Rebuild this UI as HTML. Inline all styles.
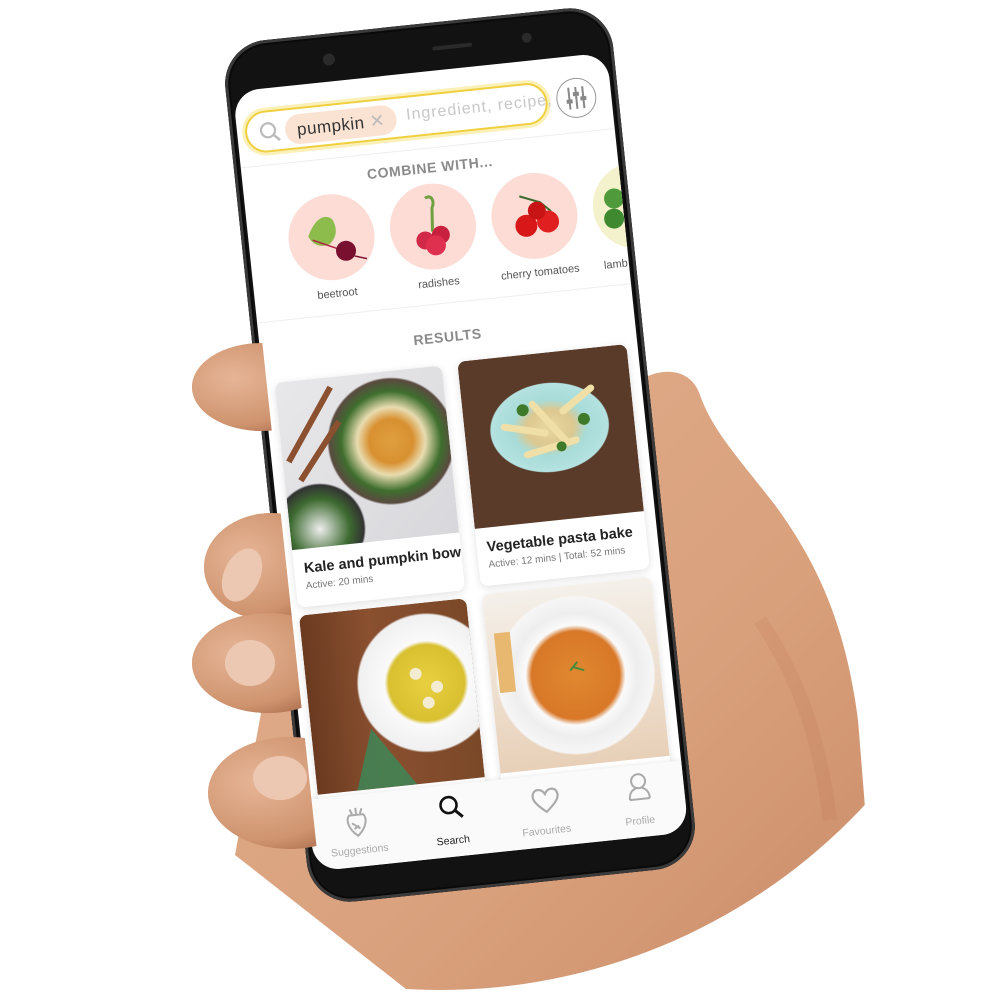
<!DOCTYPE html>
<html><head><meta charset="utf-8"><style>
*{margin:0;padding:0;box-sizing:border-box}
body{width:1000px;height:1000px;background:#fff;overflow:hidden;position:relative;font-family:"Liberation Sans",sans-serif}
#back,#front{position:absolute;left:0;top:0}
#phone{position:absolute;left:265px;top:22px;width:390px;height:866px;background:#121212;border-radius:44px;transform:rotate(-6deg);box-shadow:inset 0 0 0 3px #3a3a3a,inset 0 0 0 5px #0a0a0a}
.cam{position:absolute;border-radius:50%;background:#2a2a2a}
#screen{position:absolute;left:7px;top:48px;width:376px;height:784px;background:#fff;border-radius:26px;overflow:hidden}
.abs{position:absolute}
.search{left:8px;top:22px;width:304px;height:42px;border:2px solid #efcf3e;border-radius:22px;box-shadow:0 0 0 3px #fbf0b8}
.chip{left:38px;top:5px;width:112px;height:30px;background:#fbe3d4;border-radius:15px;font-size:17px;color:#333;padding:5px 0 0 12px;letter-spacing:.5px}
.ph{left:160px;top:9px;font-size:16px;color:#c8c8c8;letter-spacing:1px;white-space:nowrap}
.circ{width:86px;height:86px;border-radius:50%;background:#fcdcd5;top:112px}
.lab{top:206px;font-size:11px;color:#555;width:120px;text-align:center}
.h{width:376px;text-align:center;font-size:14px;font-weight:bold;color:#8a8a8a;letter-spacing:.6px}
.card{background:#fff;border-radius:8px;box-shadow:0 2px 8px rgba(0,0,0,.12);overflow:hidden}
.img{position:absolute;left:0;top:0;width:100%}
.t{position:absolute;left:10px;font-size:14.5px;font-weight:bold;color:#222;white-space:nowrap}
.s{position:absolute;left:10px;font-size:10px;color:#777;white-space:nowrap}
.nav{left:0;top:712px;width:376px;height:72px;background:#fafafa;box-shadow:0 -1px 4px rgba(0,0,0,.08)}
.nl{position:absolute;top:50px;font-size:10.5px;color:#aaa;width:94px;text-align:center}
</style></head><body>
<svg id="back" width="1000" height="1000">
<defs><clipPath id="c"><circle cx="440" cy="410" r="580"/></clipPath>
<linearGradient id="sk" x1="0" y1="0" x2="1" y2="1"><stop offset="0" stop-color="#e2b08f"/><stop offset=".6" stop-color="#d9a07c"/><stop offset="1" stop-color="#c98a66"/></linearGradient>
<radialGradient id="f" cx=".3" cy=".4" r=".75"><stop offset="0" stop-color="#e6b597"/><stop offset=".7" stop-color="#cf946f"/><stop offset="1" stop-color="#a86a4c"/></radialGradient></defs>
<g clip-path="url(#c)">
<path d="M640,380 C660,368 690,366 700,395 C712,430 740,460 775,505 C815,560 845,620 858,720 L866,820 L880,1010 L420,1000 L235,855 L300,500 Z" fill="url(#sk)"/>
<path d="M760,620 C800,680 820,740 830,820" stroke="#c27e5c" stroke-width="14" fill="none" opacity=".25"/>
</g>
<g id="fingers">
<ellipse cx="262" cy="387" rx="70" ry="44" fill="url(#f)"/>
<ellipse cx="272" cy="567" rx="68" ry="54" fill="url(#f)"/>
<ellipse cx="268" cy="663" rx="76" ry="50" fill="url(#f)"/>
<ellipse cx="290" cy="793" rx="82" ry="56" fill="url(#f)"/>
</g>
</svg>
<div id="phone">
<div class="cam" style="left:100px;top:20px;width:12px;height:12px"></div>
<div class="cam" style="left:210px;top:24px;width:40px;height:4px;border-radius:2px"></div>
<div class="cam" style="left:300px;top:20px;width:10px;height:10px"></div>
<div id="screen">
 <div class="abs search">
  <svg class="abs" style="left:12px;top:9px" width="22" height="22"><circle cx="9" cy="9" r="7" stroke="#bbb" stroke-width="2.2" fill="none"/><path d="M14 14l6 6" stroke="#bbb" stroke-width="2.5"/></svg>
  <div class="abs chip">pumpkin <span style="color:#bbb;font-size:18px">&#x2715;</span></div>
  <div class="abs ph">Ingredient, recipe,</div>
 </div>
 <div class="abs" style="left:321px;top:22px;width:40px;height:40px;border:1.5px solid #999;border-radius:50%">
  <svg width="38" height="38"><g stroke="#888" stroke-width="2"><path d="M12 8v22M19 8v22M26 8v22"/></g><g fill="#888"><rect x="9" y="20" width="6" height="4"/><rect x="16" y="13" width="6" height="4"/><rect x="23" y="18" width="6" height="4"/></g></svg>
 </div>
 <div class="abs" style="left:0;top:76px;width:376px;height:1px;background:#eee"></div>
 <div class="abs h" style="top:88px">COMBINE WITH...</div>
 <div class="abs circ" style="left:40px">
  <svg width="86" height="86"><path d="M20 40 C28 22 40 18 46 26 C50 36 48 44 40 50 C32 52 24 50 20 40Z" fill="#8dbb4c"/><path d="M24 44 L50 56" stroke="#b02040" stroke-width="1.5"/><circle cx="56" cy="58" r="10" fill="#7a1030"/><path d="M64 64l12 4" stroke="#7a1030" stroke-width="1.5"/></svg></div>
 <div class="abs circ" style="left:142px">
  <svg width="86" height="86"><path d="M38 14 C44 10 48 18 44 24 L42 48" stroke="#6fa040" stroke-width="3" fill="none"/><circle cx="34" cy="56" r="9" fill="#d02a48"/><circle cx="50" cy="52" r="9" fill="#c8203f"/><circle cx="44" cy="62" r="10" fill="#e03050"/></svg></div>
 <div class="abs circ" style="left:244px">
  <svg width="86" height="86"><path d="M30 22 L50 30 L60 40" stroke="#3d6a2a" stroke-width="2" fill="none"/><circle cx="34" cy="52" r="11" fill="#d81818"/><circle cx="56" cy="50" r="11" fill="#e02020"/><circle cx="46" cy="38" r="9" fill="#c81414"/></svg></div>
 <div class="abs circ" style="left:346px;background:#f4f2cc">
  <svg width="86" height="86"><circle cx="22" cy="34" r="10" fill="#4f9a3a"/><circle cx="20" cy="54" r="10" fill="#3f8a30"/></svg></div>
 <div class="abs lab" style="left:23px">beetroot</div>
 <div class="abs lab" style="left:125px">radishes</div>
 <div class="abs lab" style="left:227px">cherry tomatoes</div>
 <div class="abs lab" style="left:329px;text-align:left;padding-left:22px">lamb</div>
 <div class="abs" style="left:0;top:232px;width:376px;height:1px;background:#eee"></div>
 <div class="abs h" style="top:258px">RESULTS</div>

 <div class="abs card" style="left:11px;top:294px;width:168px;height:226px">
  <div class="img" style="height:168px;background:radial-gradient(circle at 110px 70px,#e0a040 0,#d89030 22px,#e8dcb0 34px,#3e6e2e 50px,#5a4a40 62px,transparent 64px),radial-gradient(circle at 30px 150px,#eee 0,#3d6a30 30px,#333 44px,transparent 46px),linear-gradient(135deg,#e8e8ea,#d8d8dc)"></div>
  <svg class="img" width="168" height="168"><path d="M6 80 L55 10" stroke="#8a5030" stroke-width="6"/><path d="M16 100 L60 45" stroke="#8a5030" stroke-width="6"/></svg>
  <div class="t" style="top:180px">Kale and pumpkin bowl</div>
  <div class="s" style="top:200px">Active: 20 mins</div>
 </div>
 <div class="abs card" style="left:195px;top:292px;width:170px;height:226px">
  <div class="img" style="height:168px;background:radial-gradient(ellipse 60px 45px at 85px 75px,#e8d8a0 0,#dcc890 40%,#a8dcd8 62%,#b4e2e0 98%,#5a3a28 100%)"></div>
  <svg class="img" width="170" height="168"><g stroke="#f0e0a8" stroke-width="7" stroke-linecap="round"><path d="M40 70l40 10M70 50l30 40M100 60l30-20M60 100l50-10"/></g><g fill="#3e7a2a"><circle cx="60" cy="55" r="6"/><circle cx="120" cy="70" r="6"/><circle cx="95" cy="95" r="5"/></g></svg>
  <div class="t" style="top:180px">Vegetable pasta bake</div>
  <div class="s" style="top:200px">Active: 12 mins | Total: 52 mins</div>
 </div>
 <div class="abs card" style="left:11px;top:528px;width:168px;height:200px">
  <div class="img" style="height:180px;background:radial-gradient(circle at 120px 80px,#e8d040 0,#d8c030 38px,#fafafa 42px,#f0f0f0 68px,transparent 70px),linear-gradient(90deg,#6a3a20,#8a5030 40%,#7a4828)"></div>
  <svg class="img" width="168" height="180"><path d="M40 180 L60 120 L100 180Z" fill="#3a8a5a" opacity=".8"/><g fill="#f4ecd0"><circle cx="110" cy="70" r="6"/><circle cx="130" cy="85" r="6"/><circle cx="120" cy="100" r="6"/></g></svg>
  <div class="t" style="top:186px">Meatball soup</div>
 </div>
 <div class="abs card" style="left:195px;top:526px;width:170px;height:200px">
  <div class="img" style="height:180px;background:radial-gradient(circle at 85px 90px,#e08830 0,#d87828 44px,#fafafa 50px,#eee 62px,#f6f6f6 78px,transparent 80px),linear-gradient(#f4f0ea,#e8d0b8)"></div>
  <svg class="img" width="170" height="180"><path d="M80 85l8-8M84 82l10 4" stroke="#4a8a3a" stroke-width="2"/><rect x="8" y="40" width="16" height="60" fill="#e8b870"/></svg>
  <div class="t" style="top:186px">Red lentil soup with</div>
 </div>

 <div class="abs nav">
  <svg class="abs" style="left:32px;top:10px" width="30" height="34"><path d="M8 10 C4 14 6 24 15 31 C24 24 26 14 22 10 Z M10 18l8 6M12 24l5-3" stroke="#aaa" stroke-width="2" fill="none"/><path d="M11 9l-2-5M15 9V3M19 9l2-5" stroke="#aaa" stroke-width="2"/></svg>
  <div class="nl" style="left:0">Suggestions</div>
  <svg class="abs" style="left:128px;top:8px" width="30" height="30"><circle cx="12" cy="12" r="8" stroke="#111" stroke-width="2.6" fill="none"/><path d="M18 18l7 7" stroke="#111" stroke-width="3"/></svg>
  <div class="nl" style="left:94px;color:#222">Search</div>
  <svg class="abs" style="left:221px;top:10px" width="32" height="30"><path d="M16 27 C5 18 2 13 4 8 C6 3 13 3 16 9 C19 3 26 3 28 8 C30 13 27 18 16 27Z" stroke="#aaa" stroke-width="2.2" fill="none"/></svg>
  <div class="nl" style="left:188px">Favourites</div>
  <svg class="abs" style="left:316px;top:6px" width="30" height="32"><circle cx="15" cy="10" r="7" stroke="#aaa" stroke-width="2" fill="none"/><path d="M5 28 C5 20 9 18 12 17 M25 28 C25 20 21 18 18 17 M5 28h20" stroke="#aaa" stroke-width="2" fill="none"/></svg>
  <div class="nl" style="left:282px">Profile</div>
 </div>
</div>
</div>
<svg id="front" width="1000" height="1000">
<defs><clipPath id="fc"><polygon points="0,300 255,300 262,340 318,860 330,1000 0,1000"/></clipPath>
<radialGradient id="f2" cx=".3" cy=".4" r=".75"><stop offset="0" stop-color="#e6b597"/><stop offset=".7" stop-color="#cf946f"/><stop offset="1" stop-color="#a86a4c"/></radialGradient></defs>
<g clip-path="url(#fc)">
<ellipse cx="262" cy="387" rx="70" ry="44" fill="url(#f2)"/>
<ellipse cx="272" cy="567" rx="68" ry="54" fill="url(#f2)"/>
<ellipse cx="268" cy="663" rx="76" ry="50" fill="url(#f2)"/>
<ellipse cx="290" cy="793" rx="82" ry="56" fill="url(#f2)"/>
</g>
<ellipse cx="242" cy="575" rx="18" ry="28" fill="#ecc8b2" transform="rotate(25 242 575)"/>
<ellipse cx="250" cy="663" rx="25" ry="23" fill="#ecc8b2"/>
<ellipse cx="280" cy="778" rx="27" ry="22" fill="#ecc8b2"/>
</svg>
</body></html>
